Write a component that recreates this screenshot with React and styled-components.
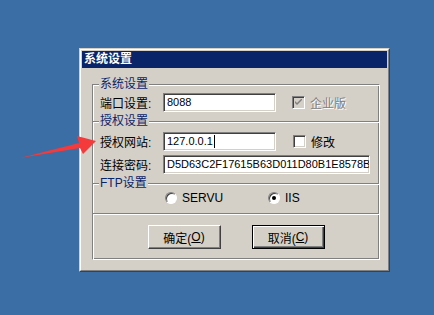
import React from 'react'
import styled, { createGlobalStyle } from 'styled-components'

const Global = createGlobalStyle`
    html, body {
        margin: 0;
        padding: 0;
        background: #3a6ea5;
    }
    body {
        width: 434px;
        height: 315px;
        overflow: hidden;
        font-family: "Liberation Sans", "Noto Sans CJK SC", sans-serif;
        font-size: 12px;
    }
`

function App() {
    return (
        <>
            <Global />
            <Desktop>
                <Window>
                    <WindowInner>
                        <TitleBar>系统设置</TitleBar>
                        <Body>
                            <Frame>
                                <Section $pt={8} $pb={9}>
                                    <Legend>系统设置</Legend>
                                    <Row>
                                        <Label>端口设置:</Label>
                                        <Input $w={113}>8088</Input>
                                        <Check $ml={16} disabled>
                                            <CheckBox disabled>
                                                <CheckMark viewBox="0 0 7 7">
                                                    <path d="M0 2 L0 4 L2 6 L7 1 L7 -1 L2 4 Z" />
                                                </CheckMark>
                                            </CheckBox>
                                            <CheckText disabled>企业版</CheckText>
                                        </Check>
                                    </Row>
                                </Section>
                                <Section $line $pt={10} $pb={9} $gap={4}>
                                    <Legend>授权设置</Legend>
                                    <Row>
                                        <Label>授权网站:</Label>
                                        <Input $w={113}>127.0.0.1<Caret /></Input>
                                        <Check $ml={17}>
                                            <CheckBox />
                                            <CheckText>修改</CheckText>
                                        </Check>
                                    </Row>
                                    <Row>
                                        <Label>连接密码:</Label>
                                        <Input $w={207}>D5D63C2F17615B63D011D80B1E8578BI</Input>
                                    </Row>
                                </Section>
                                <Section $line $pt={6} $pb={7}>
                                    <Legend>FTP设置</Legend>
                                    <RadioRow>
                                        <Radio $w={103}>
                                            <RadioDot />
                                            <span>SERVU</span>
                                        </Radio>
                                        <Radio>
                                            <RadioDot checked />
                                            <span>IIS</span>
                                        </Radio>
                                    </RadioRow>
                                </Section>
                                <Section $line $pt={11} $pb={10}>
                                    <Buttons>
                                        <Button>确定(<u>O</u>)</Button>
                                        <Button $default>取消(<u>C</u>)</Button>
                                    </Buttons>
                                </Section>
                            </Frame>
                        </Body>
                    </WindowInner>
                </Window>
                <Arrow viewBox="0 0 100 40" width="100" height="40">
                    <polygon points="20,38 79,23 77,16 96,21 83,34 80,28" fill="#f43a3a" />
                </Arrow>
            </Desktop>
        </>
    )
}

export default App

const Desktop = styled.div`
    position: relative;
    width: 434px;
    height: 315px;
`

const Window = styled.div`
    position: absolute;
    left: 79px;
    top: 48px;
    width: 311px;
    height: 224px;
    box-sizing: border-box;
    background: #d4d0c8;
    border: 1px solid;
    border-color: #d4d0c8 #404040 #404040 #d4d0c8;
`

const WindowInner = styled.div`
    height: 100%;
    box-sizing: border-box;
    border: 1px solid;
    border-color: #fff #808080 #808080 #fff;
    padding: 1px;
    display: flex;
    flex-direction: column;
`

const TitleBar = styled.div`
    height: 17px;
    background: #0a246a;
    color: #fff;
    font-weight: bold;
    font-size: 12px;
    line-height: 17px;
    padding-left: 2px;
`

const Body = styled.div`
    padding: 16px 0 0 10px;
`

const Frame = styled.div`
    width: 288px;
    box-sizing: border-box;
    border: 1px solid;
    border-color: #808080 #fff #fff #808080;
    box-shadow: inset 1px 1px 0 #fff, inset -1px -1px 0 #808080;
`

const Section = styled.div`
    position: relative;
    display: flex;
    flex-direction: column;
    gap: ${p => p.$gap || 0}px;
    padding: ${p => p.$pt}px 0 ${p => p.$pb}px 7px;
    border-top: ${p => (p.$line ? '1px solid #808080' : 'none')};
    box-shadow: ${p => (p.$line ? 'inset 0 1px 0 #fff' : 'none')};
`

const Legend = styled.div`
    position: absolute;
    left: 6px;
    top: -8px;
    padding: 0 1px;
    background: #d4d0c8;
    color: #0a246a;
    line-height: 14px;
`

const Row = styled.div`
    display: flex;
    align-items: center;
    height: 19px;
`

const Label = styled.div`
    width: 63px;
    color: #000;
    white-space: nowrap;
`

const Input = styled.div`
    width: ${p => p.$w}px;
    height: 19px;
    box-sizing: border-box;
    border: 1px solid;
    border-color: #808080 #fff #fff #808080;
    box-shadow: inset 1px 1px 0 #404040, inset -1px -1px 0 #d4d0c8;
    background: #fff;
    font-size: 11px;
    line-height: 17px;
    padding-left: 3px;
    white-space: nowrap;
    overflow: hidden;
    display: flex;
    align-items: center;
`

const Caret = styled.span`
    display: inline-block;
    width: 1px;
    height: 13px;
    background: #000;
    margin-left: 1px;
`

const Check = styled.div`
    display: flex;
    align-items: center;
    gap: 5px;
    margin-left: ${p => p.$ml}px;
`

const CheckBox = styled.div`
    position: relative;
    width: 13px;
    height: 13px;
    box-sizing: border-box;
    border: 1px solid;
    border-color: #808080 #fff #fff #808080;
    box-shadow: inset 1px 1px 0 #404040, inset -1px -1px 0 #d4d0c8;
    background: ${p => (p.disabled ? '#d4d0c8' : '#fff')};
`

const CheckMark = styled.svg`
    position: absolute;
    left: 2px;
    top: 2px;
    width: 7px;
    height: 7px;
    fill: #808080;
`

const CheckText = styled.span`
    color: ${p => (p.disabled ? '#808080' : '#000')};
    text-shadow: ${p => (p.disabled ? '1px 1px 0 #fff' : 'none')};
`

const RadioRow = styled.div`
    display: flex;
    align-items: center;
    height: 16px;
    padding-left: 65px;
`

const Radio = styled.div`
    display: flex;
    align-items: center;
    gap: 5px;
    width: ${p => (p.$w ? `${p.$w}px` : 'auto')};
    font-size: 12px;
`

const RadioDot = styled.div`
    position: relative;
    width: 12px;
    height: 12px;
    box-sizing: border-box;
    border-radius: 50%;
    border: 1px solid;
    border-color: #808080 #fff #fff #808080;
    box-shadow: inset 1px 1px 0 #404040;
    background: #fff;

    &::after {
        content: "";
        display: ${p => (p.checked ? 'block' : 'none')};
        position: absolute;
        left: 3px;
        top: 3px;
        width: 4px;
        height: 4px;
        border-radius: 50%;
        background: #000;
    }
`

const Buttons = styled.div`
    display: flex;
    justify-content: center;
    gap: 31px;
    margin-left: -7px;
`

const Button = styled.div`
    width: 73px;
    height: 24px;
    box-sizing: border-box;
    background: #d4d0c8;
    border: 1px solid;
    border-color: ${p => (p.$default ? '#000' : '#fff #404040 #404040 #fff')};
    box-shadow: ${p => (p.$default
        ? 'inset 1px 1px 0 #fff, inset -1px -1px 0 #404040, inset -2px -2px 0 #808080'
        : 'inset -1px -1px 0 #808080')};
    display: flex;
    align-items: center;
    justify-content: center;
    color: #000;
`

const Arrow = styled.svg`
    position: absolute;
    left: 0;
    top: 120px;
`
